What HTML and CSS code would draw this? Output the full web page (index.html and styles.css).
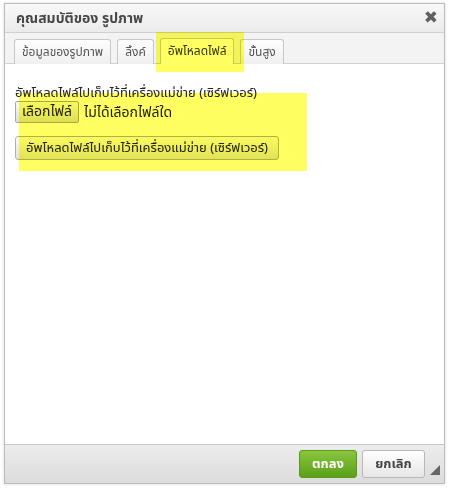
FILE: index.html
```html
<!DOCTYPE html>
<html>
<head>
<meta charset="utf-8">
<link rel="stylesheet" href="styles.css">
</head>
<body>
<div class="dialog">
  <div class="titlebar">
    <span class="title">คุณสมบัติของ รูปภาพ</span>
    <span class="close">&#x2716;</span>
  </div>
  <div class="tabs">
    <span class="tab">ข้อมูลของรูปภาพ</span>
    <span class="tab">ลิ้งค์</span>
    <span class="tab active">อัพโหลดไฟล์</span>
    <span class="tab">ขั้นสูง</span>
  </div>
  <div class="content">
    <div class="label">อัพโหลดไฟล์ไปเก็บไว้ที่เครื่องแม่ข่าย (เซิร์ฟเวอร์)</div>
    <div class="file-row">
      <span class="btn-file">เลือกไฟล์</span>
      <span class="nofile">ไม่ได้เลือกไฟล์ใด</span>
    </div>
    <div class="upload-row">
      <span class="btn-upload">อัพโหลดไฟล์ไปเก็บไว้ที่เครื่องแม่ข่าย (เซิร์ฟเวอร์)</span>
    </div>
  </div>
  <div class="footer">
    <span class="btn-ok">ตกลง</span>
    <span class="btn-cancel">ยกเลิก</span>
    <span class="resize"></span>
  </div>
</div>
<div class="hl hl-tab"></div>
<div class="hl hl-box"></div>
</body>
</html>
```

FILE: styles.css
```css
html, body {
  margin: 0;
  padding: 0;
  background: #fff;
}
body {
  width: 450px;
  height: 489px;
  overflow: hidden;
  font-family: Tahoma, "Noto Sans Thai", "Noto Sans", "DejaVu Sans", sans-serif;
  font-size: 12px;
  color: #333;
  position: relative;
}
.dialog {
  margin: 3px 0 0 4px;
  width: 439px;
  height: 479px;
  border: 1px solid #bcbcbc;
  box-shadow: 0 0 3px rgba(0,0,0,0.15);
  display: flex;
  flex-direction: column;
  background: #fff;
  position: relative;
}
.titlebar {
  height: 28px;
  flex: none;
  border-bottom: 1px solid #cfcfcf;
  background: linear-gradient(#f8f8f8, #ebebeb);
  display: flex;
  align-items: center;
  justify-content: space-between;
  padding: 0 6px 0 11px;
}
.title {
  font-weight: bold;
  font-size: 14px;
  color: #474747;
}
.close {
  font-size: 17px;
  color: #606060;
  font-weight: bold;
}
.tabs {
  flex: none;
  height: 30px;
  background: #f3f3f3;
  border-bottom: 1px solid #d1d1d1;
  display: flex;
  align-items: flex-end;
  padding-left: 9px;
  gap: 6px;
}
.tab {
  height: 24px;
  line-height: 24px;
  padding: 0 7px;
  border: 1px solid #c8c8c8;
  border-bottom: none;
  border-radius: 3px 3px 0 0;
  background: linear-gradient(#fdfdfd, #f0f0f0);
  color: #555;
  font-size: 12px;
  margin-bottom: -1px;
}
.tab.active {
  background: #fff;
  height: 25px;
  color: #333;
}
.content {
  flex: 1;
  padding: 22px 10px 0 10px;
}
.label {
  font-size: 13px;
  line-height: 15px;
  color: #222;
}
.file-row {
  display: flex;
  align-items: center;
  gap: 5px;
}
.btn-file {
  height: 20px;
  line-height: 20px;
  padding: 0 6px;
  border: 1px solid #a9a9a9;
  border-radius: 2px;
  background: linear-gradient(#f8f8f8, #dedede);
  color: #222;
  font-size: 14px;
}
.nofile {
  font-size: 14px;
  color: #222;
}
.upload-row {
  margin-top: 13px;
  display: flex;
}
.btn-upload {
  height: 22px;
  line-height: 22px;
  padding: 0 10px;
  border: 1px solid #b0b0b0;
  border-radius: 3px;
  background: linear-gradient(#fafafa, #e2e2e2);
  color: #222;
  font-size: 13px;
}
.footer {
  flex: none;
  height: 38px;
  border-top: 1px solid #c6c6c6;
  background: linear-gradient(#ececec, #dcdcdc);
  display: flex;
  align-items: center;
  justify-content: flex-end;
  padding-right: 19px;
  gap: 5px;
  position: relative;
}
.btn-ok, .btn-cancel {
  height: 26px;
  line-height: 26px;
  border-radius: 3px;
  font-weight: bold;
  font-size: 13px;
  text-align: center;
}
.btn-ok {
  width: 56px;
  border: 1px solid #5b9a17;
  background: linear-gradient(#8ac53e, #5aa01a);
  color: #fff;
}
.btn-cancel {
  width: 61px;
  border: 1px solid #b8b8b8;
  background: linear-gradient(#ffffff, #e6e6e6);
  color: #444;
}
.resize {
  position: absolute;
  right: 4px;
  bottom: 8px;
  width: 0;
  height: 0;
  border-left: 10px solid transparent;
  border-bottom: 10px solid #666;
}
.hl {
  position: absolute;
  background: rgba(255, 255, 0, 0.62);
  mix-blend-mode: multiply;
}
.hl-tab {
  left: 156px;
  top: 32px;
  width: 88px;
  height: 40px;
}
.hl-box {
  left: 19px;
  top: 93px;
  width: 288px;
  height: 78px;
}
```
